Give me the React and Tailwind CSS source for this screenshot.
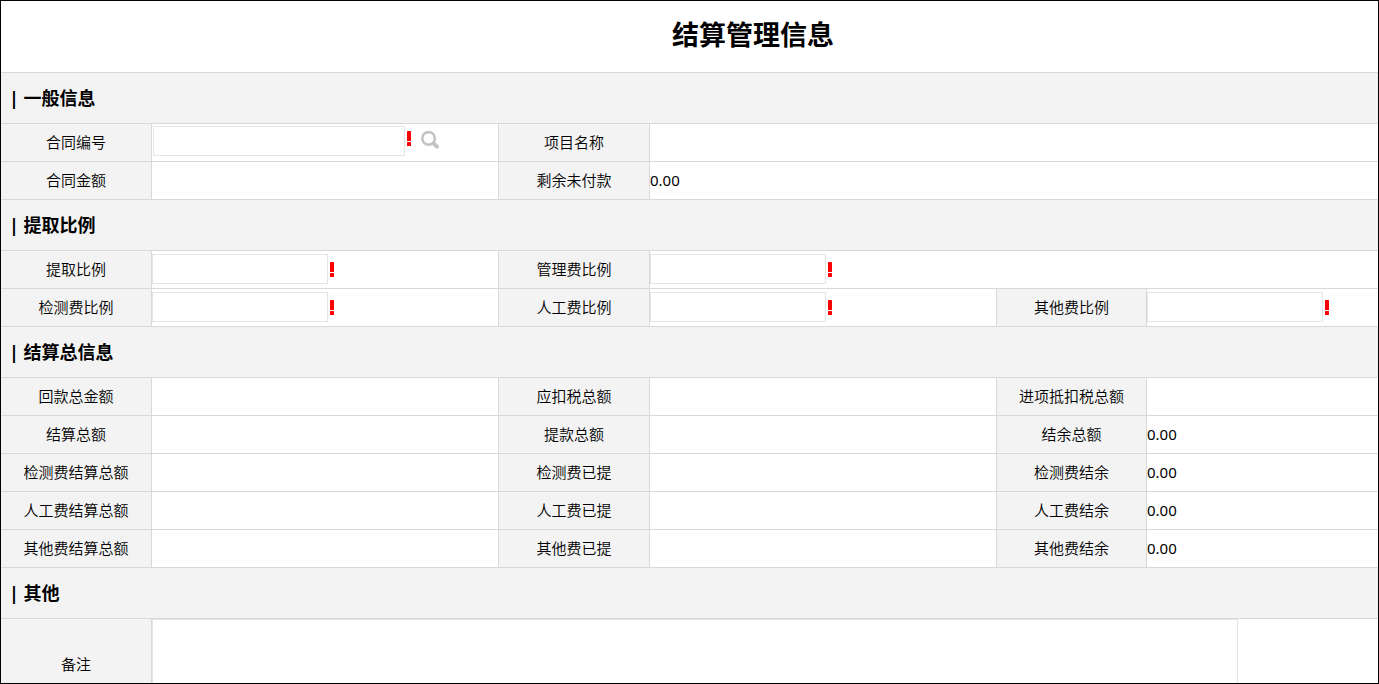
import React from "react";
import clsx from "clsx";

const cell = "border-r border-b border-[#d9d9d9] p-0 pb-0.5";

const ratioRows = [
  [
    { label: "提取比例", id: "drawRatio" },
    { label: "管理费比例", id: "manageRatio" },
  ],
  [
    { label: "检测费比例", id: "testRatio" },
    { label: "人工费比例", id: "laborRatio" },
    { label: "其他费比例", id: "otherRatio" },
  ],
];

const totalRows = [
  [["回款总金额", ""], ["应扣税总额", ""], ["进项抵扣税总额", ""]],
  [["结算总额", ""], ["提款总额", ""], ["结余总额", "0.00"]],
  [["检测费结算总额", ""], ["检测费已提", ""], ["检测费结余", "0.00"]],
  [["人工费结算总额", ""], ["人工费已提", ""], ["人工费结余", "0.00"]],
  [["其他费结算总额", ""], ["其他费已提", ""], ["其他费结余", "0.00"]],
];

// Red mark shown after required fields
const Required = () => (
  <svg className="h-4 w-2 shrink-0" viewBox="0 0 8 16" fill="#ff0000" aria-hidden="true">
    <rect x="2" y="1" width="4" height="10" rx="0.6" />
    <rect x="2" y="12" width="4" height="4" rx="0.6" />
  </svg>
);

const SearchIcon = () => (
  <svg className="h-5 w-5" viewBox="0 0 20 20" fill="none" stroke="#c3c3c3" aria-hidden="true">
    <circle cx="7.6" cy="8.4" r="6.3" strokeWidth="2.6" />
    <path d="M12.8 13.6 L16 16.6" strokeWidth="4" strokeLinecap="round" />
  </svg>
);

const Section = ({ title }) => (
  <tr>
    <th
      colSpan={6}
      className="h-[51px] border-b border-[#d9d9d9] bg-[#f3f3f3] p-0 pl-2 text-left text-lg font-bold"
    >
      | {title}
    </th>
  </tr>
);

const Label = ({ children, htmlFor }) => (
  <th className={clsx(cell, "h-[38px] bg-[#f3f3f3] text-center font-[350]")}>
    {htmlFor ? <label htmlFor={htmlFor}>{children}</label> : children}
  </th>
);

const Value = ({ children, colSpan }) => (
  <td colSpan={colSpan} className={cell}>
    {children}
  </td>
);

const App = () => {
  return (
    <div className="h-screen overflow-hidden border border-black bg-white font-['Noto_Sans','Noto_Sans_CJK_SC',sans-serif] text-[15px] leading-5 text-black">
      <table className="w-full min-w-[1504px] table-fixed border-separate border-spacing-0">
        <colgroup>
          <col className="w-[151px]" />
          <col className="w-[347px]" />
          <col className="w-[151px]" />
          <col className="w-[347px]" />
          <col className="w-[150px]" />
          <col />
        </colgroup>
        <tbody>
          <tr>
            <th colSpan={6} className="h-[72px] border-b border-[#d9d9d9] p-0 pb-1 text-center">
              <h1 className="text-[27px] leading-10 font-bold">结算管理信息</h1>
            </th>
          </tr>

          <Section title="一般信息" />
          <tr>
            <Label htmlFor="contractNo">合同编号</Label>
            <Value>
              <div className="flex items-start pb-0.5 pl-px">
                <input
                  id="contractNo"
                  type="text"
                  className="h-[30px] w-[252px] border border-[#e6e6e0] px-1 outline-none"
                />
                <div className="flex pt-1">
                  <Required />
                  <button type="button" aria-label="选择合同" className="ml-2">
                    <SearchIcon />
                  </button>
                </div>
              </div>
            </Value>
            <Label>项目名称</Label>
            <Value colSpan={3} />
          </tr>
          <tr>
            <Label>合同金额</Label>
            <Value />
            <Label>剩余未付款</Label>
            <Value colSpan={3}>0.00</Value>
          </tr>

          <Section title="提取比例" />
          {ratioRows.map((row, i) => (
            <tr key={i}>
              {row.map((field, j) => (
                <React.Fragment key={field.id}>
                  <Label htmlFor={field.id}>{field.label}</Label>
                  <Value colSpan={row.length === 2 && j === 1 ? 3 : 1}>
                    <div className="flex items-center">
                      <input
                        id={field.id}
                        type="text"
                        className="h-[30px] w-[176px] border border-[#e6e6e0] px-1 outline-none"
                      />
                      <Required />
                    </div>
                  </Value>
                </React.Fragment>
              ))}
            </tr>
          ))}

          <Section title="结算总信息" />
          {totalRows.map((row, i) => (
            <tr key={i}>
              {row.map(([label, value]) => (
                <React.Fragment key={label}>
                  <Label>{label}</Label>
                  <Value>{value}</Value>
                </React.Fragment>
              ))}
            </tr>
          ))}

          <Section title="其他" />
          <tr>
            <Label htmlFor="remark">备注</Label>
            <Value colSpan={5}>
              <textarea
                id="remark"
                className="block h-[90px] w-[1086px] resize-none border border-[#e6e6e0] px-1 outline-none"
              />
            </Value>
          </tr>
        </tbody>
      </table>
    </div>
  );
};

export default App;
